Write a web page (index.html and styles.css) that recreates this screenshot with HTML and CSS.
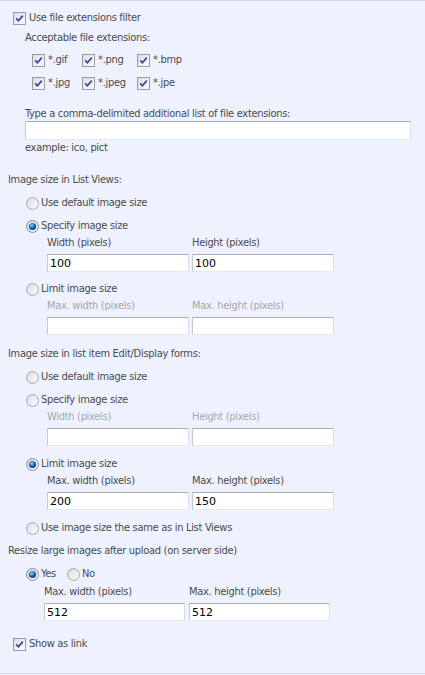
FILE: index.html
```html
<!DOCTYPE html>
<html lang="en">
<head>
  <meta charset="UTF-8">
  <meta name="viewport" content="width=device-width, initial-scale=1.0">
  <title>Picture column settings</title>
  <link rel="stylesheet" href="styles.css">
</head>
<body>
  <svg class="defs" width="0" height="0">
    <defs>
      <linearGradient id="box-fill" x1="0" y1="0" x2="1" y2="1">
        <stop offset="0" stop-color="#d9dbe0"/>
        <stop offset="1" stop-color="#ffffff"/>
      </linearGradient>
      <radialGradient id="dot-fill" cx="0.4" cy="0.35" r="0.65">
        <stop offset="0" stop-color="#9fd6ff"/>
        <stop offset="0.45" stop-color="#2b7fd0"/>
        <stop offset="1" stop-color="#0a2f6c"/>
      </radialGradient>
      <symbol id="cb-on" viewBox="0 0 13 13">
        <rect x="0.5" y="0.5" width="12" height="12" fill="url(#box-fill)" stroke="#9a9ba0"/>
        <path d="M3.2 6.4 L5.4 8.8 L9.8 3.6" fill="none" stroke="#2a4ba3" stroke-width="1.7"/>
      </symbol>
      <symbol id="rb-off" viewBox="0 0 13 13">
        <circle cx="6.5" cy="6.5" r="5.9" fill="url(#box-fill)" stroke="#a3a5aa"/>
      </symbol>
      <symbol id="rb-on" viewBox="0 0 13 13">
        <circle cx="6.5" cy="6.5" r="5.9" fill="url(#box-fill)" stroke="#7d8590"/>
        <circle cx="6.5" cy="6.5" r="3.6" fill="url(#dot-fill)"/>
      </symbol>
    </defs>
  </svg>

  <div class="panel">
    <label class="check top-check"><svg class="box"><use href="#cb-on"/></svg>Use file extensions filter</label>

    <div class="sub">
      <div class="caption">Acceptable file extensions:</div>
      <div class="ext-grid">
        <label class="check"><svg class="box"><use href="#cb-on"/></svg>*.gif</label>
        <label class="check"><svg class="box"><use href="#cb-on"/></svg>*.png</label>
        <label class="check"><svg class="box"><use href="#cb-on"/></svg>*.bmp</label>
        <label class="check"><svg class="box"><use href="#cb-on"/></svg>*.jpg</label>
        <label class="check"><svg class="box"><use href="#cb-on"/></svg>*.jpeg</label>
        <label class="check"><svg class="box"><use href="#cb-on"/></svg>*.jpe</label>
      </div>
      <div class="field-label">Type a comma-delimited additional list of file extensions:</div>
      <input class="textbox wide" type="text" value="">
      <div class="hint">example: ico, pict</div>
    </div>

    <div class="title first">Image size in List Views:</div>
    <div class="opts">
      <label class="radio"><svg class="box"><use href="#rb-off"/></svg>Use default image size</label>
      <label class="radio"><svg class="box"><use href="#rb-on"/></svg>Specify image size</label>
      <div class="pair">
        <div class="col"><div class="lbl">Width (pixels)</div><input class="textbox" type="text" value="100"></div>
        <div class="col"><div class="lbl">Height (pixels)</div><input class="textbox" type="text" value="100"></div>
      </div>
      <label class="radio after-pair"><svg class="box"><use href="#rb-off"/></svg>Limit image size</label>
      <div class="pair off">
        <div class="col"><div class="lbl">Max. width (pixels)</div><input class="textbox" type="text" value=""></div>
        <div class="col"><div class="lbl">Max. height (pixels)</div><input class="textbox" type="text" value=""></div>
      </div>
    </div>

    <div class="title">Image size in list item Edit/Display forms:</div>
    <div class="opts">
      <label class="radio"><svg class="box"><use href="#rb-off"/></svg>Use default image size</label>
      <label class="radio"><svg class="box"><use href="#rb-off"/></svg>Specify image size</label>
      <div class="pair off">
        <div class="col"><div class="lbl">Width (pixels)</div><input class="textbox" type="text" value=""></div>
        <div class="col"><div class="lbl">Height (pixels)</div><input class="textbox" type="text" value=""></div>
      </div>
      <label class="radio after-pair wide-gap"><svg class="box"><use href="#rb-on"/></svg>Limit image size</label>
      <div class="pair">
        <div class="col"><div class="lbl">Max. width (pixels)</div><input class="textbox" type="text" value="200"></div>
        <div class="col"><div class="lbl">Max. height (pixels)</div><input class="textbox" type="text" value="150"></div>
      </div>
      <label class="radio after-pair wide-gap"><svg class="box"><use href="#rb-off"/></svg>Use image size the same as in List Views</label>
    </div>

    <div class="title tight">Resize large images after upload (on server side)</div>
    <div class="opts">
      <div class="inline">
        <label class="radio yes"><svg class="box"><use href="#rb-on"/></svg>Yes</label>
        <label class="radio"><svg class="box"><use href="#rb-off"/></svg>No</label>
      </div>
      <div class="pair resize">
        <div class="col"><div class="lbl">Max. width (pixels)</div><input class="textbox" type="text" value="512"></div>
        <div class="col"><div class="lbl">Max. height (pixels)</div><input class="textbox" type="text" value="512"></div>
      </div>
    </div>

    <label class="check top-check last"><svg class="box"><use href="#cb-on"/></svg>Show as link</label>
  </div>
</body>
</html>
```

FILE: styles.css
```css
* {
  box-sizing: border-box;
}
body {
  margin: 0;
  padding: 0;
  background-color: #eef2fe;
  font-family: "DejaVu Sans Condensed", "DejaVu Sans", sans-serif;
  font-size: 11px;
  letter-spacing: -0.3px;
  color: #4a4a4a;
}
.defs {
  position: absolute;
}
.panel {
  height: 674px;
  padding: 9px 0 0 8px;
  border-top: 1px solid #d3d6e0;
  border-bottom: 1px solid #d3d6e0;
}
.box {
  width: 13px;
  height: 13px;
  flex: none;
}
.check, .radio {
  display: flex;
  align-items: center;
  height: 16px;
  line-height: 16px;
  white-space: nowrap;
}
.check .box {
  margin-right: 3px;
}
.radio .box {
  margin-right: 2px;
}
.top-check {
  margin-left: 5px;
}
.top-check.last {
  margin-top: 15px;
}
.sub {
  margin-left: 17px;
}
.caption {
  margin-top: 4px;
  line-height: 16px;
}
.ext-grid {
  display: grid;
  grid-template-columns: 50px 55px auto;
  row-gap: 7px;
  margin: 6px 0 0 7px;
}
.field-label {
  margin-top: 16px;
  line-height: 14px;
}
.hint {
  margin-top: 1px;
  line-height: 14px;
}
.textbox {
  display: block;
  width: 142px;
  height: 18px;
  margin: 4px 0 0;
  padding: 0 2px;
  background: #fff;
  border: 1px solid;
  border-color: #abadb3 #dbdfe6 #e3e9ef #c5c9d0;
  font-family: "DejaVu Sans", sans-serif;
  font-size: 11px;
  letter-spacing: 0;
  color: #000;
  outline: none;
}
.textbox.wide {
  width: 386px;
  height: 19px;
  margin-top: 0;
}
.title {
  margin-top: 11px;
  line-height: 16px;
}
.title.first {
  margin-top: 17px;
}
.title.tight {
  margin-top: 7px;
}
.opts {
  margin-left: 18px;
}
.opts .radio, .opts .inline {
  margin-top: 7px;
}
.opts .radio.after-pair {
  margin-top: 9px;
}
.opts .radio.wide-gap {
  margin-top: 10px;
}
.inline {
  display: flex;
}
.inline .radio {
  margin-top: 0;
}
.radio.yes {
  width: 41px;
}
.pair {
  display: flex;
  gap: 3px;
  margin: 2px 0 0 21px;
}
.pair .lbl {
  line-height: 14px;
}
.pair.off .lbl {
  color: #a6a6a6;
}
.pair.resize {
  gap: 4px;
  margin: 3px 0 0 18px;
}
.pair.resize .textbox {
  width: 141px;
}
```
